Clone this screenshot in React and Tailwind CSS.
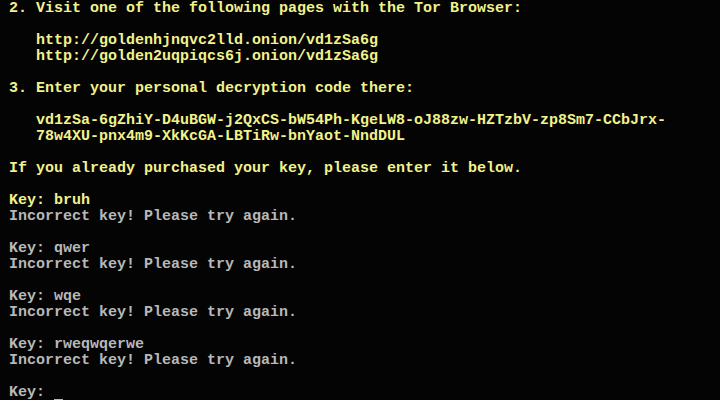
import React from "react";

const Y = "text-[#f2f28c]";
const G = "text-[#b8b8b8]";

const lines = [
  [Y, " 2. Visit one of the following pages with the Tor Browser:"],
  [Y, ""],
  [Y, "    http://goldenhjnqvc2lld.onion/vd1zSa6g"],
  [Y, "    http://golden2uqpiqcs6j.onion/vd1zSa6g"],
  [Y, ""],
  [Y, " 3. Enter your personal decryption code there:"],
  [Y, ""],
  [Y, "    vd1zSa-6gZhiY-D4uBGW-j2QxCS-bW54Ph-KgeLW8-oJ88zw-HZTzbV-zp8Sm7-CCbJrx-"],
  [Y, "    78w4XU-pnx4m9-XkKcGA-LBTiRw-bnYaot-NndDUL"],
  [Y, ""],
  [Y, " If you already purchased your key, please enter it below."],
  [Y, ""],
  [Y, " Key: bruh"],
  [G, " Incorrect key! Please try again."],
  [G, ""],
  [G, " Key: qwer"],
  [G, " Incorrect key! Please try again."],
  [G, ""],
  [G, " Key: wqe"],
  [G, " Incorrect key! Please try again."],
  [G, ""],
  [G, " Key: rweqwqerwe"],
  [G, " Incorrect key! Please try again."],
  [G, ""],
];

const App = () => {
  return (
    <div className="w-[720px] h-[400px] overflow-hidden bg-[#040404] font-['Liberation_Mono',monospace] text-[15px] font-bold">
      {lines.map(([color, text], i) => (
        <div key={i} className={`h-4 pt-[2px] leading-[14px] whitespace-pre ${color}`}>
          {text}
        </div>
      ))}
      <div className={`h-4 pt-[2px] leading-[14px] whitespace-pre flex ${G}`}>
        <span>{" Key: "}</span>
        <span className="relative w-[9px] h-[14px]">
          <span className="absolute left-0 -bottom-[1px] w-[9px] h-[2px] bg-[#b8b8b8]"></span>
        </span>
      </div>
    </div>
  );
};

export default App;
